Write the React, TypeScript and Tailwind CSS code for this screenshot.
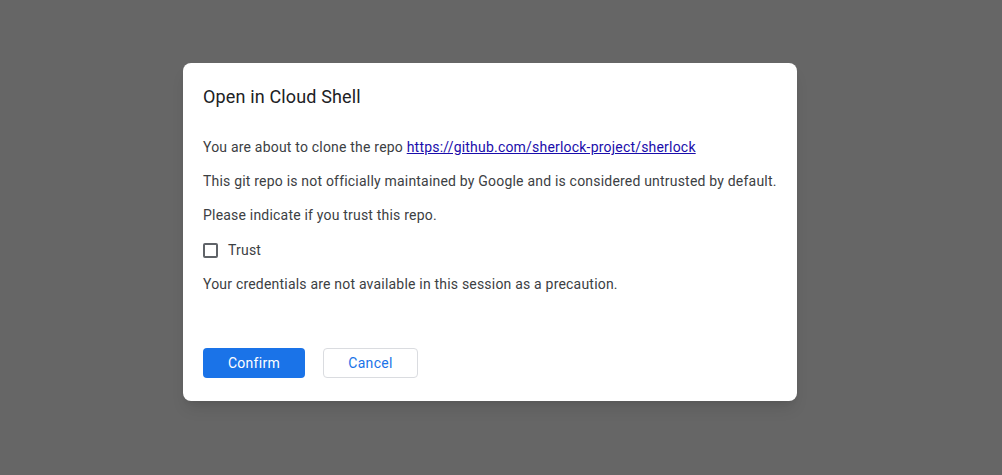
export default function App() {
  return (
    <div
      className="w-[1002px] h-[475px] bg-[#666666] pt-[63px] pl-[183px]"
      style={{ fontFamily: "Roboto, 'Liberation Sans', sans-serif" }}
    >
      <div className="w-[614px] h-[338px] bg-white rounded-lg px-5 pt-[22px] shadow-lg">
        <h2 className="text-[18px] leading-6 tracking-[0.15px] text-[#202124]">Open in Cloud Shell</h2>

        <div className="mt-[28px] flex flex-col gap-[14px] text-sm leading-5 tracking-[0.2px] text-[#3c4043]">
          <p>
            You are about to clone the repo{" "}
            <a href="#" className="text-[#1a0dab] underline">
              https://github.com/sherlock-project/sherlock
            </a>
          </p>
          <p>This git repo is not officially maintained by Google and is considered untrusted by default.</p>
          <p>Please indicate if you trust this repo.</p>
          <label className="flex items-center gap-[10px] h-5 mt-px">
            <span className="w-[15px] h-[15px] border-2 border-[#5f6368] rounded-[2px]" />
            <span className="text-[#3c4043]">Trust</span>
          </label>
          <p>Your credentials are not available in this session as a precaution.</p>
        </div>

        <div className="mt-[54px] flex gap-[18px]">
          <button
            type="button"
            className="w-[102px] h-[30px] rounded bg-[#1a73e8] text-white text-sm tracking-[0.3px]"
          >
            Confirm
          </button>
          <button
            type="button"
            className="w-[95px] h-[30px] rounded border border-[#dadce0] bg-white text-[#1a73e8] text-sm tracking-[0.3px]"
          >
            Cancel
          </button>
        </div>
      </div>
    </div>
  );
}
